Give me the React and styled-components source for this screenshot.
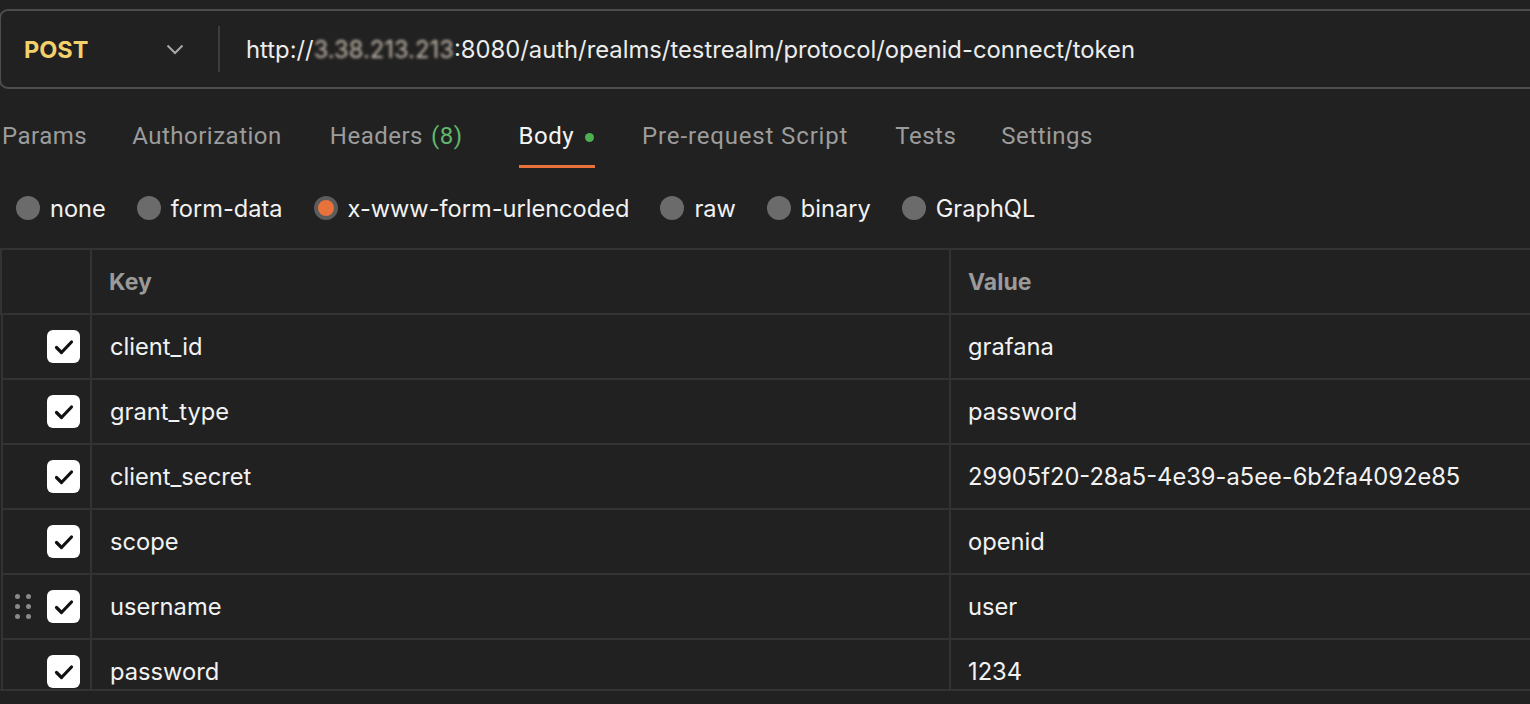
import React from 'react';
import styled, { createGlobalStyle } from 'styled-components';

const GlobalStyle = createGlobalStyle`
  html, body {
    margin: 0;
    padding: 0;
    background: #212121;
    overflow: hidden;
  }
  body {
    font-family: Inter, "Noto Sans", sans-serif;
  }
`;

const Page = styled.div`
  width: 1530px;
  height: 704px;
  background: #212121;
  padding-top: 9px;
  box-sizing: border-box;
  overflow: hidden;
`;

const UrlBar = styled.div`
  display: flex;
  align-items: center;
  height: 80px;
  width: 1560px;
  box-sizing: border-box;
  border: 2px solid #4d4d4d;
  border-radius: 9px;
  margin-left: -1px;
`;

const Method = styled.div`
  display: flex;
  align-items: center;
  width: 219px;
  height: 46px;
  padding-left: 23px;
  box-sizing: border-box;
  border-right: 2px solid #3d3d3d;
  font-size: 23.5px;
  font-weight: 700;
  color: #f2d06b;

  span {
    flex: 1;
  }
  svg {
    margin-right: 34px;
  }
`;

const Url = styled.div`
  padding-left: 26px;
  font-size: 23.8px;
  color: #ececec;
  white-space: nowrap;
`;

const Masked = styled.span`
  color: #c4b8aa;
  filter: blur(1.4px);
`;

const Tabs = styled.div`
  display: flex;
  height: 79px;
  padding-left: 2px;
  font-family: Roboto, Inter, sans-serif;
`;

const Tab = styled.div`
  display: flex;
  align-items: center;
  height: 79px;
  padding-top: 18px;
  box-sizing: border-box;
  margin-right: ${p => p.$gap}px;
  font-size: 24px;
  letter-spacing: ${p => p.$spacing || 0.5}px;
  color: ${p => (p.$active ? '#f4f4f4' : '#9c9c9c')};
  border-bottom: 3px solid ${p => (p.$active ? '#e8713c' : 'transparent')};

  em {
    font-style: normal;
    color: #5fb86b;
    margin-left: 8px;
  }
`;

const Dot = styled.i`
  width: 9px;
  height: 9px;
  border-radius: 50%;
  background: #4caf50;
  margin: 2px 1px 0 11px;
`;

const Radios = styled.div`
  display: flex;
  align-items: center;
  height: 80px;
  padding-left: 16px;
  gap: 31px;
`;

const Radio = styled.label`
  display: flex;
  align-items: center;
  gap: 10px;
  font-size: 23.6px;
  color: #f2f2f2;
`;

const RadioDot = styled.span`
  width: 24px;
  height: 24px;
  border-radius: 50%;
  box-sizing: border-box;
  background: ${p => (p.$on ? '#e8713c' : '#6b6b6b')};
  border: ${p => (p.$on ? '4px solid #5c5c5c' : 'none')};
`;

const TableFrame = styled.div`
  height: 443px;
  box-sizing: border-box;
  overflow: hidden;
  border-top: 2px solid #333;
  border-bottom: 2px solid #333;
`;

const Table = styled.div`
  display: grid;
  grid-template-columns: 90px 859px 1fr;
`;

const Cell = styled.div`
  display: flex;
  align-items: center;
  height: 65px;
  box-sizing: border-box;
  border-left: 2px solid #333;
  border-bottom: 2px solid #333;
  padding-left: ${p => p.$pad || 17}px;
  font-size: 23.7px;
  color: #f2f2f2;
  white-space: nowrap;
`;

const HeadCell = styled(Cell)`
  font-size: 23px;
  font-weight: 700;
  color: #9a9a9a;
`;

const CheckCell = styled(Cell)`
  justify-content: flex-end;
  padding-right: 10px;
  padding-left: 12px;
  margin-left: 1px;
`;

const Handle = styled.div`
  display: grid;
  grid-template-columns: repeat(2, 5px);
  gap: 5px 6px;
  margin-right: auto;
  span {
    width: 5px;
    height: 5px;
    border-radius: 50%;
    background: #8a8a8a;
  }
`;

const Check = styled.div`
  width: 33px;
  height: 33px;
  border-radius: 6px;
  background: #fff;
  display: flex;
  align-items: center;
  justify-content: center;
`;

const rows = [
  ['client_id', 'grafana'],
  ['grant_type', 'password'],
  ['client_secret', '29905f20-28a5-4e39-a5ee-6b2fa4092e85'],
  ['scope', 'openid'],
  ['username', 'user', true],
  ['password', '1234'],
];

const bodyTypes = ['none', 'form-data', 'x-www-form-urlencoded', 'raw', 'binary', 'GraphQL'];

export default function App() {
  return (
    <Page>
      <GlobalStyle />
      <UrlBar>
        <Method>
          <span>POST</span>
          <svg width="18" height="11" viewBox="0 0 18 11" fill="none">
            <path d="M1.5 1.5l7.5 7.5 7.5-7.5" stroke="#a8a8a8" strokeWidth="2" />
          </svg>
        </Method>
        <Url>
          http://<Masked>3.38.213.213</Masked>:8080/auth/realms/testrealm/protocol/openid-connect/token
        </Url>
      </UrlBar>

      <Tabs>
        <Tab $gap={45}>Params</Tab>
        <Tab $gap={48}>Authorization</Tab>
        <Tab $gap={56}>Headers<em>(8)</em></Tab>
        <Tab $gap={47} $active>Body<Dot /></Tab>
        <Tab $gap={47} $spacing={0.85}>Pre-request Script</Tab>
        <Tab $gap={45}>Tests</Tab>
        <Tab $gap={48}>Settings</Tab>
      </Tabs>

      <Radios>
        {bodyTypes.map(t => (
          <Radio key={t}>
            <RadioDot $on={t === 'x-www-form-urlencoded'} />
            {t}
          </Radio>
        ))}
      </Radios>

      <TableFrame>
        <Table>
          <HeadCell />
          <HeadCell>Key</HeadCell>
          <HeadCell>Value</HeadCell>
          {rows.map(([k, v, drag]) => (
            <React.Fragment key={k}>
              <CheckCell>
                {drag && (
                  <Handle>
                    <span /><span /><span /><span /><span /><span />
                  </Handle>
                )}
                <Check>
                  <svg width="20" height="16" viewBox="0 0 20 16" fill="none">
                    <path d="M2.5 8.5l5 5 10-10.5" stroke="#111" strokeWidth="3.2" strokeLinecap="round" strokeLinejoin="round" />
                  </svg>
                </Check>
              </CheckCell>
              <Cell $pad={18}>{k}</Cell>
              <Cell>{v}</Cell>
            </React.Fragment>
          ))}
        </Table>
      </TableFrame>
    </Page>
  );
}
